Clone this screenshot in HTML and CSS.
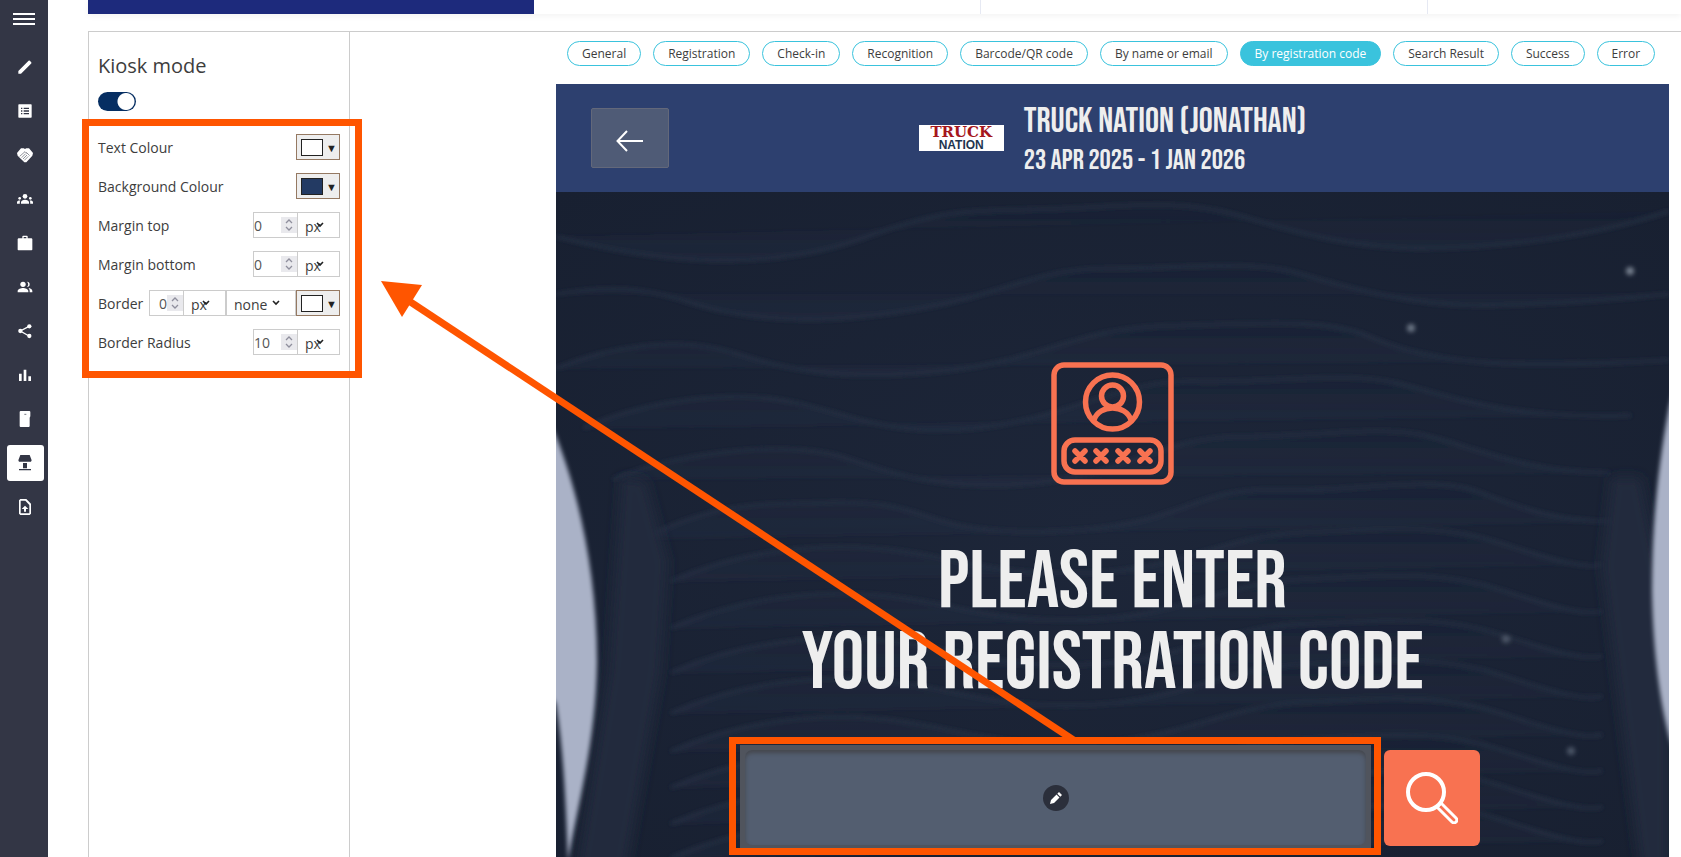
FILE: index.html
```
<!DOCTYPE html>
<html lang="en">
<head>
    <meta charset="UTF-8">
    <meta name="viewport" content="width=device-width, initial-scale=1.0">
    <title>Kiosk mode</title>
    <link rel="stylesheet" href="styles.css">
</head>
<body>
    <!-- shared icons -->
    <svg class="defs" aria-hidden="true">
        <symbol id="chevron" viewBox="0 0 8 6"><path d="M1 1l3 3 3-3" fill="none" stroke="#222" stroke-width="1.600"/></symbol>
        <symbol id="spinner" viewBox="0 0 16 16">
            <rect width="16" height="16" fill="#e9e9ed"/>
            <path d="M5 6l3-3 3 3M5 10l3 3 3-3" fill="none" stroke="#8f8f9d" stroke-width="1.3"/>
        </symbol>
    </svg>

    <div class="app">
        <nav class="sidebar">
            <button class="menu" aria-label="Menu"><span></span><span></span><span></span></button>
            <a href="#" aria-label="Edit"><svg viewBox="0 0 24 24"><path d="M2 18L15.500 4.500l1.800-1.800a1.500 1.500 0 0 1 2 0l2 2a1.500 1.500 0 0 1 0 2l-1.800 1.800L6 22H2z"/></svg></a>
            <a href="#" aria-label="Forms"><svg viewBox="0 0 24 24"><path fill-rule="evenodd" d="M3 2h18a1 1 0 0 1 1 1v18a1 1 0 0 1-1 1H3a1 1 0 0 1-1-1V3a1 1 0 0 1 1-1zM6 7v2h2V7zM10 7v2h8V7zM6 11v2h2v-2zM10 11v2h8v-2zM6 15v2h2v-2zM10 15v2h8v-2z"/></svg></a>
            <a href="#" aria-label="Partners"><svg viewBox="0 0 24 24"><path d="M6 2h4l2 1 2-1h4l6 7-1 4-9 10h-3L1 13 0 9z"/><path d="M4 14l8-7 3 3M7 16l6-6M9 18l6-6M11 20l6-6M14 8l5 5" fill="none" stroke="#333645" stroke-width=".8"/></svg></a>
            <a href="#" aria-label="Attendees"><svg viewBox="0 0 24 24"><circle cx="12" cy="8" r="3.500"/><circle cx="4" cy="11" r="2"/><circle cx="20" cy="11" r="2"/><path d="M6 19v-2c0-2.500 3-4 6-4s6 1.500 6 4v2zM0 19v-2c0-2 2-3 5-2.800-.6.800-.8 1.600-.8 2.800v2zM24 19v-2c0-2-2-3-5-2.800.6.800.8 1.600.8 2.800v2z"/></svg></a>
            <a href="#" aria-label="Business"><svg viewBox="0 0 24 24"><path fill-rule="evenodd" d="M8 5V2l1-1h6l1 1v3h6l1 1v16l-1 1H2l-1-1V6l1-1zM10 5h4V3h-4z"/></svg></a>
            <a href="#" aria-label="Users"><svg viewBox="0 0 24 24"><circle cx="9" cy="8" r="4"/><path d="M15 4a4 4 0 1 1 0 8 6 6 0 0 0 0-8zM1 20v-2c0-3 5-4.500 8-4.500s8 1.500 8 4.500v2zM17 13.600c3 .4 6 1.900 6 4.400v2h-4v-2c0-2-.7-3.400-2-4.400z"/></svg></a>
            <a href="#" aria-label="Share"><svg viewBox="0 0 24 24"><circle cx="18.500" cy="5" r="3.200"/><circle cx="5" cy="12" r="3.200"/><circle cx="18.500" cy="19.500" r="3.200"/><path d="M18 5L5 12l13 7.500" fill="none" stroke="#fff" stroke-width="2"/></svg></a>
            <a href="#" aria-label="Statistics"><svg viewBox="0 0 24 24"><path d="M3 10h4v11H3zM10 4h4v17h-4zM17 14h4v7h-4z"/></svg></a>
            <a href="#" aria-label="Badges"><svg viewBox="0 0 24 24"><path d="M5 0h14l1 1v7l-1 2v13l-1 1H5l-1-1V1z"/><path d="M11 5h3" stroke="#333645"/></svg></a>
            <a href="#" class="active" aria-label="Kiosk"><svg viewBox="0 0 24 24"><path d="M5 0h14l3 8-1 2H3L2 8zM9 12h6v8H9zM3 21h18v2H3z"/></svg></a>
            <a href="#" aria-label="Upload"><svg viewBox="0 0 24 24"><path fill-rule="evenodd" d="M5 0h9l7 7v15l-2 2H5l-2-2V2zM5.500 2.500v19h13V9l-6-6.500z"/><path d="M12 10l5 5h-3.500v4h-3v-4H7z"/></svg></a>
        </nav>

        <main class="main">
            <div class="steps">
                <div class="step current"></div>
                <div class="step"></div>
                <div class="step"></div>
                <div class="step"></div>
            </div>

            <div class="workspace">
                <aside class="settings">
                    <h1>Kiosk mode</h1>
                    <label class="toggle"><input type="checkbox" aria-label="Kiosk mode" checked></label>

                    <form class="fields">
                        <div class="field">
                            <label for="textColour">Text Colour</label>
                            <button type="button" id="textColour" class="colour"><span class="swatch"></span>▼</button>
                        </div>
                        <div class="field">
                            <label for="bgColour">Background Colour</label>
                            <button type="button" id="bgColour" class="colour"><span class="swatch navy"></span>▼</button>
                        </div>
                        <div class="field">
                            <label for="marginTop">Margin top</label>
                            <div class="number"><input type="number" id="marginTop" value="0"><svg><use href="#spinner"/></svg></div>
                            <div class="unit"><select aria-label="Margin top unit"><option>px</option></select><svg><use href="#chevron"/></svg></div>
                        </div>
                        <div class="field">
                            <label for="marginBottom">Margin bottom</label>
                            <div class="number"><input type="number" id="marginBottom" value="0"><svg><use href="#spinner"/></svg></div>
                            <div class="unit"><select aria-label="Margin bottom unit"><option>px</option></select><svg><use href="#chevron"/></svg></div>
                        </div>
                        <div class="field">
                            <label for="border">Border</label>
                            <div class="number small"><input type="number" id="border" value="0"><svg><use href="#spinner"/></svg></div>
                            <div class="unit"><select aria-label="Border unit"><option>px</option></select><svg><use href="#chevron"/></svg></div>
                            <div class="unit wide"><select aria-label="Border style"><option>none</option></select><svg><use href="#chevron"/></svg></div>
                            <button type="button" class="colour" aria-label="Border colour"><span class="swatch"></span>▼</button>
                        </div>
                        <div class="field">
                            <label for="radius">Border Radius</label>
                            <div class="number"><input type="number" id="radius" value="10"><svg><use href="#spinner"/></svg></div>
                            <div class="unit"><select aria-label="Border radius unit"><option>px</option></select><svg><use href="#chevron"/></svg></div>
                        </div>
                    </form>
                </aside>

                <section class="preview">
                    <div class="chips">
                        <button>General</button>
                        <button>Registration</button>
                        <button>Check-in</button>
                        <button>Recognition</button>
                        <button>Barcode/QR code</button>
                        <button>By name or email</button>
                        <button class="selected">By registration code</button>
                        <button>Search Result</button>
                        <button>Success</button>
                        <button>Error</button>
                    </div>

                    <div class="kiosk">
                        <header class="kiosk-header">
                            <button class="back" aria-label="Back">
                                <svg viewBox="0 0 28 22"><path d="M27 11H2M11 1L1.500 11l9.500 10" fill="none" stroke="#fff" stroke-width="2"/></svg>
                            </button>
                            <div class="event">
                                <div class="logo"><b>TRUCK</b><i>NATION</i></div>
                                <div class="event-text">
                                    <h2>TRUCK NATION (JONATHAN)</h2>
                                    <p>23 APR 2025 - 1 JAN 2026</p>
                                </div>
                            </div>
                        </header>

                        <div class="kiosk-body">
                            <svg class="backdrop" viewBox="0 0 1113 665" preserveAspectRatio="none" aria-hidden="true">
                                <defs>
                                    <filter id="soft" x="-5%" y="-5%" width="110%" height="110%"><feGaussianBlur stdDeviation="2"/></filter>
                                    <filter id="softer" x="-50%" y="-20%" width="200%" height="140%"><feGaussianBlur stdDeviation="6"/></filter>
                                    <linearGradient id="shade" x1="0" y1="0" x2="0" y2="1">
                                        <stop offset="0" stop-color="#29334a" stop-opacity="0"/>
                                        <stop offset="1" stop-color="#29334a" stop-opacity=".3"/>
                                    </linearGradient>
                                </defs>
                                <g filter="url(#soft)">
                                    <g class="waves" transform="scale(.7275 .4255) translate(-22 -5)">
                                        <path d="M22 110C200 190 340 180 450 110S600 50 700 45S880 20 960 60S1120 140 1220 138S1450 110 1552 50"/>
                                        <path d="M22 245C150 210 180 260 250 285S400 315 520 280S680 185 780 185S980 165 1040 195S1200 275 1300 272S1500 255 1552 245"/>
                                        <path d="M22 420C90 370 190 340 270 385S430 450 560 425S740 325 860 320S1080 300 1140 345S1280 410 1370 410S1500 405 1552 400"/>
                                        <path d="M60 560C150 490 270 470 350 500S480 580 600 560S800 445 900 450S1110 425 1180 455S1330 540 1500 530"/>
                                        <path d="M100 680C200 610 350 590 420 630S560 710 680 690S860 580 960 580S1150 555 1210 575S1350 665 1470 665"/>
                                        <path d="M140 820C250 730 300 740 400 735S520 770 580 790S740 810 820 780S920 700 1020 705S1230 670 1290 710S1400 780 1480 780"/>
                                        <path id="wave" d="M180 920C300 830 420 830 500 850S640 910 760 900S950 810 1050 805S1230 780 1320 830S1440 890 1460 880"/>
                                        <use href="#wave" y="110"/>
                                        <use href="#wave" y="215"/>
                                        <use href="#wave" y="310"/>
                                        <use href="#wave" y="400"/>
                                        <use href="#wave" y="485"/>
                                        <use href="#wave" y="570"/>
                                        <use href="#wave" y="650"/>
                                    </g>
                                    <circle cx="1074" cy="79" r="4" fill="#77808f"/>
                                    <circle cx="855" cy="136" r="4" fill="#6b7484"/>
                                    <circle cx="950" cy="447" r="4" fill="#4b5566"/>
                                    <circle cx="1015" cy="559" r="4" fill="#4b5566"/>
                                </g>
                                <g filter="url(#softer)" fill="#232c3e">
                                    <path d="M65 285L90 288 112 370 105 480 70 680H20L52 480z"/>
                                    <path d="M1055 285h30l28 140v260h-28l-40-310z"/>
                                </g>
                                <g filter="url(#soft)" fill="#aab2c7">
                                    <path d="M-20 200L0 244C22 300 41 380 41 470C40 550 22 610 12 670C10 620 8 560 0 512L-20 480z"/>
                                    <path d="M1133 140L1113 215C1099 290 1096 350 1096 400C1097 460 1104 510 1113 545L1133 600z"/>
                                </g>
                            </svg>

                            <svg class="code-icon" viewBox="0 0 123 123" aria-hidden="true">
                                <g fill="none" stroke="#f87251" stroke-width="5.500">
                                    <rect x="3" y="3" width="117" height="117" rx="10"/>
                                    <circle cx="61.500" cy="40" r="27"/>
                                    <circle cx="61.500" cy="34" r="11"/>
                                    <path d="M43 58c5-16 32-16 37 0"/>
                                    <rect x="13" y="78" width="97" height="32" rx="11"/>
                                    <path stroke-linecap="round" d="M24 89l10 10m0-10L24 99M45 89l10 10m0-10L45 99M67 89l10 10m0-10L67 99M89 89l10 10m0-10L89 99"/>
                                </g>
                            </svg>

                            <h2 class="prompt">PLEASE ENTER<br>YOUR REGISTRATION CODE</h2>

                            <form class="search">
                                <div class="code-field">
                                    <input type="text" aria-label="Registration code">
                                    <button type="button" class="edit" aria-label="Edit field">
                                        <svg viewBox="0 0 12 12"><path d="M0 12l1-4 5.500-5.500 3 3L4 11zM7.300 1.700L9 0l3 3-1.700 1.700z" fill="#fff"/></svg>
                                    </button>
                                </div>
                                <button type="button" class="find" aria-label="Search">
                                    <svg viewBox="0 0 52 52"><g fill="none" stroke="#fff" stroke-width="4"><circle cx="20" cy="20" r="18"/><path stroke-width="3" stroke-linejoin="round" d="M31 35l4-4 15 15a2.800 2.800 0 0 1-4 4z"/></g></svg>
                                </button>
                            </form>
                        </div>
                    </div>
                </section>
            </div>
        </main>

        <!-- arrow from the code field to its settings -->
        <svg class="arrow" viewBox="0 0 700 462" aria-hidden="true">
            <path d="M694 460L28 20" fill="none" stroke="#ff5500" stroke-width="7"/>
            <path d="M0 0l41 4-20 32z" fill="#ff5500"/>
        </svg>
    </div>
</body>
</html>
```
FILE: styles.css
```
* {
    box-sizing: border-box;
}
body {
    margin: 0;
    font-family: "Open Sans", sans-serif;
    font-size: 14px;
    color: #3d3d3d;
    background-color: #fff;
}
button, input, select {
    font-family: inherit;
    font-size: inherit;
    color: inherit;
    margin: 0;
    padding: 0;
}
button {
    cursor: pointer;
}
h1, h2, p {
    margin: 0;
    font-weight: 400;
}
.defs {
    display: none;
}
.app {
    position: relative;
    display: flex;
    min-height: 100vh;
    overflow: hidden;
}

/* Sidebar */
.sidebar {
    flex: 0 0 48px;
    display: flex;
    flex-direction: column;
    align-items: center;
    gap: 8px;
    padding: 12px 0 0 2px;
    background-color: #333645;
}
.menu {
    display: flex;
    flex-direction: column;
    gap: 3px;
    width: 22px;
    margin: 1px 2px 16px 0;
    border: 0;
    background: none;
}
.menu span {
    height: 2px;
    background-color: #fff;
}
.sidebar a {
    display: flex;
    align-items: center;
    justify-content: center;
    width: 37px;
    height: 36px;
    border-radius: 3px;
    fill: #fff;
}
.sidebar a svg {
    width: 16px;
    height: 16px;
}
.sidebar a.active {
    background-color: #fff;
    fill: #333645;
}

/* Main area */
.main {
    flex: 1;
    min-width: 0;
    display: flex;
    flex-direction: column;
    padding-left: 40px;
}
.steps {
    display: flex;
    gap: 1px;
    height: 14px;
    box-shadow: 0 2px 6px rgba(0, 0, 0, 0.05);
}
.step {
    flex: 0 0 28%;
    border-right: 1px solid #e6e9f3;
}
.step.current {
    background-color: #1d2a7c;
    border-right: 0;
}
.workspace {
    flex: 1;
    display: flex;
    margin-top: 17px;
    border-top: 1px solid #ccc;
    border-left: 1px solid #ccc;
}

/* Settings */
.settings {
    flex: 0 0 261px;
    padding: 20px 9px;
    border-right: 1px solid #ccc;
}
.settings h1 {
    font-size: 20px;
    line-height: 28px;
}
.toggle {
    display: block;
    margin-top: 12px;
    height: 20px;
}
.toggle input {
    appearance: none;
    display: block;
    width: 38px;
    height: 19px;
    border-radius: 10px;
    background: radial-gradient(circle at 28px 50%, #fff 8px, #062e62 9px);
}
.fields {
    position: relative;
    display: flex;
    flex-direction: column;
    gap: 13px;
    margin-top: 22px;
}
.fields::after {
    content: "";
    position: absolute;
    inset: -15px -22px -23px -16px;
    border: 7px solid #ff5500;
    pointer-events: none;
}
.field {
    display: flex;
    height: 26px;
    line-height: 28px;
}
.field label {
    flex: 1;
}
.colour {
    display: flex;
    align-items: center;
    gap: 3px;
    width: 44px;
    padding-left: 4px;
    border: 1px solid #957962;
    background-color: #eee;
    font-size: 11px;
    color: #222;
}
.swatch {
    width: 22px;
    height: 17px;
    border: 1px solid #222;
    background-color: #fff;
}
.swatch.navy {
    background-color: #233a63;
}
.number {
    position: relative;
    width: 44px;
}
.number input {
    appearance: textfield;
    display: block;
    width: 100%;
    height: 26px;
    border: 1px solid #ccc;
    border-right: 0;
    border-radius: 0;
    color: #555;
}
.number.small {
    width: 34px;
}
.number.small input {
    padding-left: 9px;
}
.number input::-webkit-inner-spin-button {
    appearance: none;
    margin: 0;
}
.number svg {
    position: absolute;
    right: 0;
    top: 5px;
    width: 16px;
    height: 16px;
}
.unit {
    position: relative;
    width: 43px;
}
.unit.wide {
    width: 70px;
}
.unit select {
    appearance: none;
    display: block;
    width: 100%;
    height: 26px;
    padding: 2px 0 0 7px;
    border: 1px solid #ccc;
    border-radius: 0;
    background-color: transparent;
}
.unit svg {
    position: absolute;
    right: 16px;
    top: 10px;
    width: 8px;
    height: 6px;
    pointer-events: none;
}

/* Preview */
.preview {
    flex: 1;
    min-width: 0;
    display: flex;
    flex-direction: column;
    margin-left: 206px;
    margin-right: 12px;
}
.chips {
    display: flex;
    gap: 12px;
    padding: 9px 0 18px 11px;
}
.chips button {
    height: 25px;
    padding: 0 14px;
    border: 1px solid #3ac3dd;
    border-radius: 13px;
    background-color: #fff;
    font-size: 12px;
    white-space: nowrap;
}
.chips .selected {
    background-color: #3ac3dd;
    color: #fff;
}
.kiosk {
    flex: 1;
    display: flex;
    flex-direction: column;
    color: #eee;
    font-family: "Bebas Neue", "Liberation Sans Narrow", "Liberation Sans", sans-serif;
}
.kiosk-header {
    position: relative;
    display: flex;
    align-items: center;
    height: 108px;
    background-color: #2d406f;
}
.back {
    position: absolute;
    left: 35px;
    top: 24px;
    display: flex;
    align-items: center;
    justify-content: center;
    width: 78px;
    height: 60px;
    padding-top: 6px;
    border: 1px solid #63687a;
    border-radius: 2px;
    background-color: #4f5b76;
}
.back svg {
    width: 28px;
    height: 22px;
}
.event {
    display: flex;
    align-items: center;
    gap: 20px;
    margin: 0 auto;
    white-space: nowrap;
}
.event-text {
    padding-top: 4px;
}
.event h2 {
    font-size: 35px;
    line-height: 42px;
}
.event p {
    font-size: 28px;
    line-height: 36px;
}
.logo {
    display: flex;
    flex-direction: column;
    align-items: center;
    width: 85px;
    height: 26px;
    background-color: #fff;
    font-family: "DejaVu Serif", serif;
}
.logo b {
    font-size: 15px;
    line-height: 15px;
    color: #a5161c;
}
.logo i {
    font-family: "Liberation Sans", sans-serif;
    font-style: normal;
    font-weight: 700;
    font-size: 12px;
    line-height: 11px;
    color: #1e3550;
}
.kiosk-body {
    position: relative;
    flex: 1;
    display: flex;
    flex-direction: column;
    align-items: center;
    padding: 170px 0 9px;
    background: radial-gradient(ellipse at 50% 50%, #1d2639, #182031);
}
.backdrop {
    position: absolute;
    inset: 0;
    width: 100%;
    height: 100%;
}
.waves {
    fill: url(#shade);
    stroke: #273145;
    stroke-width: 6;
}
.code-icon {
    position: relative;
    width: 123px;
    height: 123px;
}
.prompt {
    position: relative;
    margin-top: 57px;
    font-size: 81px;
    line-height: 81px;
    text-align: center;
    white-space: nowrap;
}
.search {
    position: relative;
    display: flex;
    gap: 18px;
    margin-top: 46px;
}
.code-field {
    position: relative;
}
.code-field input {
    position: relative;
    display: block;
    width: 621px;
    height: 95px;
    border: 0;
    border-radius: 7px;
    background-color: #535e70;
    box-shadow: inset 0 3px 4px #45474d;
}
.code-field::before {
    content: "";
    position: absolute;
    inset: -5px;
    background-color: #50545d;
}
.code-field::after {
    content: "";
    position: absolute;
    inset: -13px -15px -9px -16px;
    border: 7px solid #ff5500;
    pointer-events: none;
}
.edit {
    position: absolute;
    left: 50%;
    top: 50%;
    width: 26px;
    height: 26px;
    transform: translate(-50%, -50%);
    border: 0;
    border-radius: 50%;
    background-color: #2b2f3b;
}
.edit svg {
    display: block;
    width: 12px;
    height: 12px;
    margin: auto;
}
.find {
    width: 96px;
    height: 96px;
    border: 0;
    border-radius: 6px;
    background-color: #f87251;
}
.find svg {
    width: 52px;
    height: 52px;
    vertical-align: middle;
}

/* Callout arrow */
.arrow {
    position: absolute;
    left: 381px;
    top: 281px;
    width: 700px;
    height: 462px;
    pointer-events: none;
}
```
